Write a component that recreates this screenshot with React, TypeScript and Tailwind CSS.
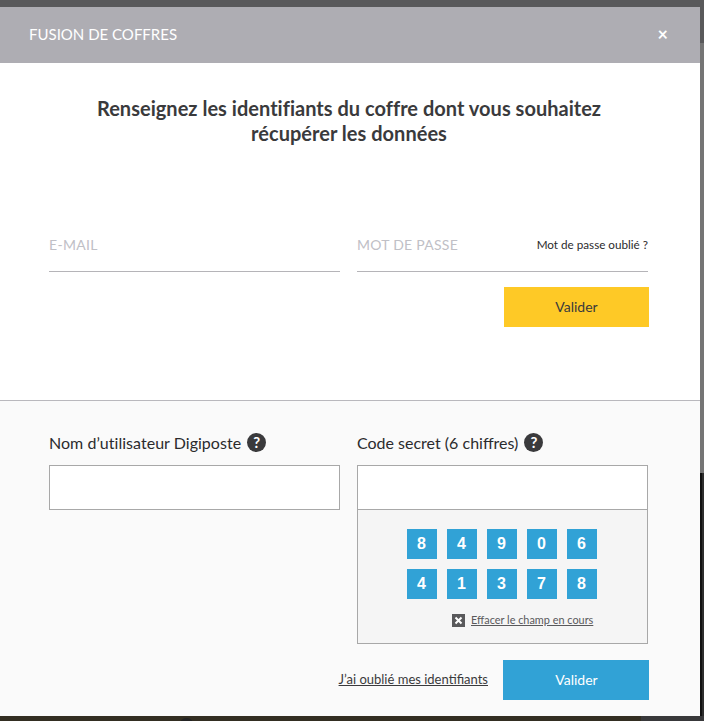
import React from "react";

const rows = [
  ["8", "4", "9", "0", "6"],
  ["4", "1", "3", "7", "8"],
];

function Help() {
  return (
    <span className="flex h-[19px] w-[19px] items-center justify-center rounded-full bg-[#3a3a3c] text-[15px] font-bold leading-none text-white">
      ?
    </span>
  );
}

export default function App() {
  return (
    <div className="flex h-[721px] w-[704px] flex-col overflow-hidden bg-[#59595b] pt-[7px] font-['Lato',sans-serif]">
      <div className="flex flex-1 overflow-hidden">
        <div className="flex w-[700px] shrink-0 flex-col">
          {/* Header */}
          <div className="flex h-[56px] items-center justify-between bg-[#aeadb3] pb-[1px] pl-[29px] pr-[32px]">
            <span className="text-[15px] text-white">FUSION DE COFFRES</span>
            <span className="pb-[1px] text-[18px] font-bold leading-none text-white">×</span>
          </div>

          {/* Top form */}
          <div className="h-[338px] border-b border-[#b9b8bd] bg-white px-[49px]">
            <h1 className="mt-[33px] pr-[2px] text-center text-[20px] font-bold leading-[25px] tracking-[0.02px] text-[#3a3a3c]">
              Renseignez les identifiants du coffre dont vous souhaitez
              <br />
              récupérer les données
            </h1>
            <div className="mt-[72px] flex gap-[17px]">
              <div className="flex h-[54px] w-[291px] items-center border-b border-[#b5b4b8] text-[14px] tracking-[0.3px] text-[#c0c0c6]">
                E-MAIL
              </div>
              <div className="flex h-[54px] w-[291px] items-center justify-between border-b border-[#b5b4b8]">
                <span className="text-[14px] tracking-[0.25px] text-[#c0c0c6]">MOT DE PASSE</span>
                <span className="text-[11.7px] text-[#2b2b2d]">Mot de passe oublié ?</span>
              </div>
            </div>
            <div className="mt-[15px] flex justify-end pr-[2px]">
              <button className="h-[40px] w-[145px] bg-[#fec926] pb-[2px] text-[14px] text-[#3a3a3c]">Valider</button>
            </div>
          </div>

          {/* Digiposte form */}
          <div className="flex-1 bg-[#fafafa] px-[49px] pt-[31px]">
            <div className="flex gap-[17px]">
              <div className="w-[291px]">
                <div className="flex h-[21px] items-center gap-[6px] text-[16px] tracking-[0.03px] text-[#2b2b2d]">
                  Nom d’utilisateur Digiposte <Help />
                </div>
                <div className="mt-[12px] h-[45px] border border-[#a8a8a8] bg-white" />
              </div>
              <div className="w-[291px]">
                <div className="flex h-[21px] items-center gap-[6px] text-[16px] text-[#2b2b2d]">
                  Code secret (6 chiffres) <Help />
                </div>
                <div className="mt-[12px] h-[179px] border border-[#a8a8a8] bg-[#f5f5f5]">
                  <div className="h-[44px] border-b border-[#a8a8a8] bg-white" />
                  <div className="mt-[19px] flex flex-col items-center gap-[10px] pr-[1px]">
                    {rows.map((row, i) => (
                      <div key={i} className="flex gap-[10px]">
                        {row.map((n, j) => (
                          <div
                            key={j}
                            className="flex h-[30px] w-[30px] items-center justify-center bg-[#31a2d6] pr-[1px] font-['Liberation_Sans',sans-serif] text-[16px] font-bold text-white"
                          >
                            {n}
                          </div>
                        ))}
                      </div>
                    ))}
                  </div>
                  <div className="mt-[13px] flex items-center pl-[94px]">
                    <svg width="13" height="13" viewBox="0 0 13 13" className="mr-[6px]">
                      <rect width="13" height="13" fill="#59595b" />
                      <path d="M3.5 3.5l6 6M9.5 3.5l-6 6" stroke="#fff" strokeWidth="2" />
                    </svg>
                    <span className="text-[10.9px] text-[#59595b] underline">Effacer le champ en cours</span>
                  </div>
                </div>
              </div>
            </div>
            <div className="mt-[16px] flex items-center justify-end gap-[15px] pr-[2px]">
              <span className="text-[13px] text-[#3a3a3c] underline">J’ai oublié mes identifiants</span>
              <button className="h-[40px] w-[146px] bg-[#31a2d6] pb-[2px] pl-[1px] text-[14px] text-white">Valider</button>
            </div>
          </div>
        </div>
        <div className="flex flex-1 flex-col">
          <div className="h-[36px] bg-[#59595b]" />
          <div className="h-[430px] bg-[#757575]" />
          <div className="flex-1 border-l-2 border-[#111111] bg-[#2d2d2d]" />
        </div>
      </div>
      <div className="relative flex h-[5px] shrink-0">
        <div className="w-[641px] bg-[#332e22]" />
        <div className="flex-1 bg-[#38383a]" />
        <div className="absolute left-[180px] top-[2px] h-[6px] w-[13px] rounded-t-full bg-[#232323]" />
      </div>
    </div>
  );
}
